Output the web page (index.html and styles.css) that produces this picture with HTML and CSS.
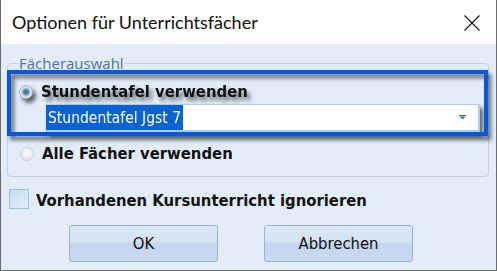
FILE: index.html
```html
<!DOCTYPE html>
<html lang="de">
<head>
    <meta charset="UTF-8">
    <meta name="viewport" content="width=device-width, initial-scale=1.0">
    <title>Optionen für Unterrichtsfächer</title>
    <link rel="stylesheet" href="styles.css">
</head>
<body>
    <div class="dialog">
        <div class="titlebar">
            <span class="title">Optionen für Unterrichtsfächer</span>
            <svg class="close" width="16" height="16" viewBox="0 0 16 16">
                <path d="M0.5 0.5 L15.5 15.5 M15.5 0.5 L0.5 15.5" stroke="#111" stroke-width="1.1" fill="none"/>
            </svg>
        </div>

        <div class="dialog-body">
            <fieldset class="group">
                <legend>Fächerauswahl</legend>
                <div class="highlight">
                    <label class="option">
                        <span class="radio checked"></span>
                        Stundentafel verwenden
                    </label>
                    <div class="combo">
                        <span class="combo-value">Stundentafel Jgst 7</span>
                        <svg class="combo-arrow" width="7" height="5" viewBox="0 0 7 5">
                            <path d="M0 0 H7 V1 H0 Z M0.5 1.5 H6.5 L3.5 4.5 Z" fill="#3f66a6"/>
                        </svg>
                    </div>
                </div>
                <label class="option second">
                    <span class="radio"></span>
                    Alle Fächer verwenden
                </label>
            </fieldset>

            <label class="check">
                <span class="box"></span>
                Vorhandenen Kursunterricht ignorieren
            </label>

            <div class="actions">
                <button class="btn">OK</button>
                <button class="btn">Abbrechen</button>
            </div>
        </div>
    </div>
</body>
</html>
```

FILE: styles.css
```css
body {
    margin: 0;
    background-color: #fff;
    font-family: "DejaVu Sans Condensed", "DejaVu Sans", sans-serif;
}

.dialog {
    width: 497px;
    height: 271px;
    box-sizing: border-box;
    border: 1px solid #6c6c6c;
    border-top: none;
    background-color: #e3edfa;
    display: flex;
    flex-direction: column;
}

.titlebar {
    height: 44px;
    flex-shrink: 0;
    background-color: #fff;
    display: flex;
    align-items: center;
    justify-content: space-between;
    padding: 0 16px 0 11px;
}

.title {
    font-family: Lato, "Open Sans", sans-serif;
    font-size: 18px;
    color: #111;
}

.close {
    margin-top: 1px;
}

.dialog-body {
    padding: 11px 7px 0 6px;
}

.group {
    margin: 0;
    padding: 0 0 12px 0;
    border: 1px solid #c2d3e7;
    border-radius: 4px;
}

.group legend {
    margin-left: 10px;
    padding: 0 1px;
    font-family: "Open Sans", sans-serif;
    font-size: 15px;
    line-height: 16px;
    color: #4e72a6;
}

.highlight {
    margin: -1px 0 0 -1px;
    border: 4px solid #0558d6;
    padding: 8px 4px 0 8px;
    filter: drop-shadow(3px 4px 2px rgba(0, 0, 0, 0.6));
}

.option {
    display: flex;
    align-items: center;
    gap: 8px;
    font-size: 16.5px;
    font-weight: bold;
    line-height: 20px;
    color: #111;
}

.option.second {
    margin: 8px 0 0 12px;
}

.radio {
    width: 14px;
    height: 14px;
    border-radius: 50%;
    box-sizing: border-box;
    border: 1px solid #c9cfd6;
    background: radial-gradient(circle at 50% 40%, #fbfbfb, #dcdfe3);
}

.radio.checked {
    border-color: #a9b2bd;
    background: radial-gradient(circle, #2c5f95 0, #6f9bc8 3px, #c4ced8 4px, #eef0f2 6px);
}

.combo {
    margin: 2px 0 0 27px;
    height: 28px;
    box-sizing: border-box;
    border: 1px solid #a8cdef;
    border-width: 1px 2px 2px 0;
    background-color: #fff;
    display: flex;
    align-items: center;
    justify-content: space-between;
}

.combo-value {
    align-self: stretch;
    display: flex;
    align-items: center;
    padding: 0 2px;
    background-color: #0a63d0;
    color: #fff;
    font-size: 15.5px;
}

.combo-arrow {
    margin-right: 12px;
}

.check {
    margin: 12px 0 0 2px;
    display: flex;
    align-items: flex-start;
    gap: 7px;
    font-size: 16.5px;
    font-weight: bold;
    line-height: 24px;
    color: #111;
}

.box {
    width: 20px;
    height: 20px;
    box-sizing: border-box;
    border: 1px solid #9dc3e6;
    background: linear-gradient(135deg, #c4dcf2, #e6f1fb);
}

.actions {
    margin-top: 12px;
    padding-left: 62px;
    display: flex;
    gap: 46px;
}

.btn {
    width: 149px;
    height: 37px;
    border: 1px solid #97b3da;
    border-radius: 3px;
    background: linear-gradient(#dce8f7 0%, #d3e2f5 45%, #c3d6ef 52%, #c8daf1 100%);
    font-family: "DejaVu Sans Condensed", "DejaVu Sans", sans-serif;
    font-size: 16.5px;
    color: #111;
}
```
